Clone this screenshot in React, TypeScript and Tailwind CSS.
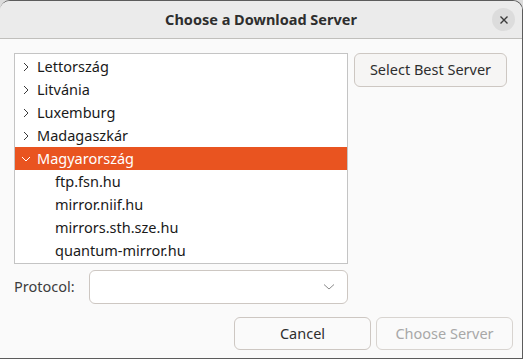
import React from "react";

const font = { fontFamily: '"Noto Sans", "Open Sans", sans-serif' };

function Chevron({ open, color }: { open?: boolean; color: string }) {
  return (
    <svg width="10" height="10" viewBox="0 0 10 10" className="shrink-0">
      {open ? (
        <path d="M1 3 L5 7 L9 3" fill="none" stroke={color} strokeWidth="1" />
      ) : (
        <path d="M3 1 L7 5 L3 9" fill="none" stroke={color} strokeWidth="1" />
      )}
    </svg>
  );
}

export default function App() {
  const countries = ["Lettország", "Litvánia", "Luxemburg", "Madagaszkár"];
  const servers = ["ftp.fsn.hu", "mirror.niif.hu", "mirrors.sth.sze.hu", "quantum-mirror.hu"];
  return (
    <div className="w-[523px] h-[359px] overflow-hidden bg-[#dcdcdc]" style={font}>
      <div className="w-[523px] h-[359px] bg-[#fafafa] rounded-t-[10px] overflow-hidden flex flex-col border-t border-r border-b border-[#5c5c5c]">
        <div className="h-[38px] bg-[#ebebeb] border-b border-[#c0bfbc] flex items-center justify-center relative shrink-0">
          <span className="text-[14.5px] font-bold text-[#2e2e2e]">Choose a Download Server</span>
          <div className="absolute right-[7px] top-[7px] w-[23px] h-[23px] rounded-full bg-[#dcdcdc] flex items-center justify-center">
            <svg width="10" height="10" viewBox="0 0 10 10">
              <path d="M1.5 1.5 L8.5 8.5 M8.5 1.5 L1.5 8.5" stroke="#3a3a3a" strokeWidth="1.4" />
            </svg>
          </div>
        </div>
        <div className="flex flex-col pl-[14px] pt-[14px]">
          <div className="flex gap-[6px]">
            <div className="w-[334px] h-[211px] border border-[#c4c4c4] bg-white pt-[1px] flex flex-col">
              {countries.map((c) => (
                <div key={c} className="h-[23px] flex items-center pl-[6px] text-[14.5px] text-[#1a1a1a]">
                  <Chevron color="#3a3a3a" />
                  <span className="ml-[6px]">{c}</span>
                </div>
              ))}
              <div className="h-[23px] flex items-center pl-[6px] text-[14.5px] text-white bg-[#e95420]">
                <Chevron open color="#ffffff" />
                <span className="ml-[6px]">Magyarország</span>
              </div>
              {servers.map((s) => (
                <div key={s} className="h-[23px] flex items-center pl-[40px] text-[14.5px] text-[#1a1a1a]">
                  {s}
                </div>
              ))}
            </div>
            <button className="w-[153px] h-[34px] border border-[#cdc7c2] rounded-[6px] bg-[#f6f5f4] text-[14.5px] text-[#2e2e2e]">
              Select Best Server
            </button>
          </div>
          <div className="flex items-center mt-[6px]">
            <span className="w-[75px] text-[14.5px] text-[#3d3d3d]">Protocol:</span>
            <div className="w-[259px] h-[34px] border border-[#cdc7c2] rounded-[6px] bg-white flex items-center justify-end pr-[12px]">
              <svg width="12" height="8" viewBox="0 0 12 8">
                <path d="M1 1.5 L6 6 L11 1.5" fill="none" stroke="#8a8a8a" strokeWidth="1" />
              </svg>
            </div>
          </div>
          <div className="flex justify-end gap-[5px] mt-[13px] pr-[9px]">
            <button className="w-[137px] h-[33px] border border-[#cdc7c2] rounded-[6px] bg-[#fafafa] text-[14.5px] text-[#2e2e2e]">
              Cancel
            </button>
            <button className="w-[137px] h-[33px] border border-[#d8d4d0] rounded-[6px] bg-[#fafafa] text-[14.5px] text-[#a8a8a8]">
              Choose Server
            </button>
          </div>
        </div>
      </div>
    </div>
  );
}
